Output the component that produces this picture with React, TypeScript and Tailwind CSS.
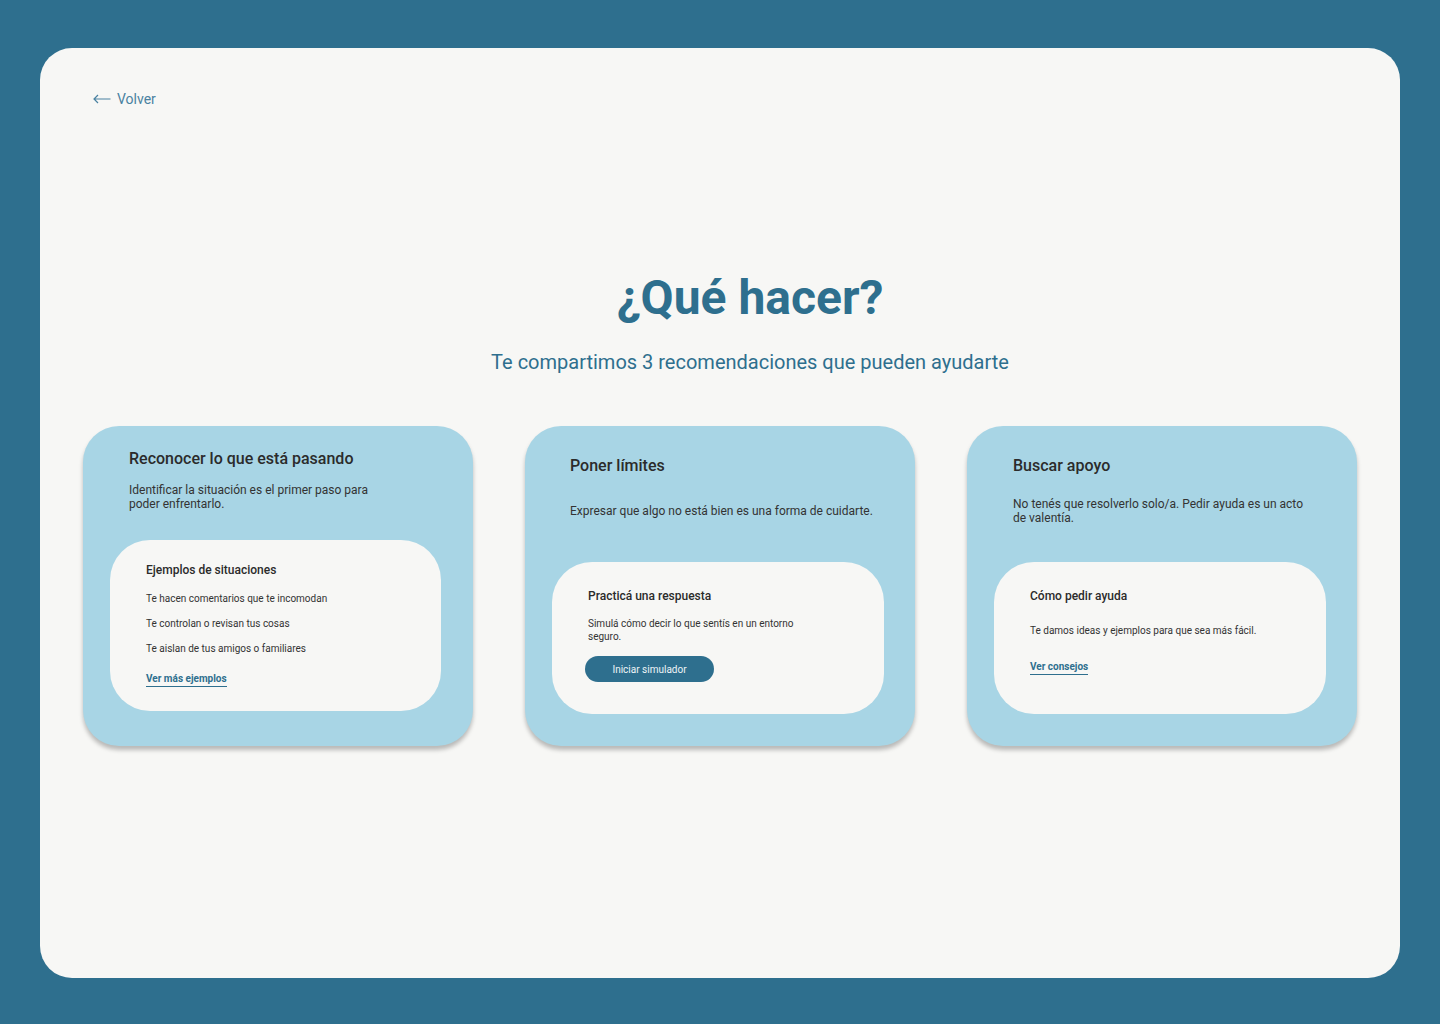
const font = { fontFamily: "Roboto, 'Noto Sans', Arial, sans-serif" };

function Link({ children }: { children: React.ReactNode }) {
  return (
    <a
      href="#"
      className="inline-block border-b-[1.5px] border-[#2e6f8e] pb-px text-[10px] font-bold leading-[12px] text-[#2e6f8e]"
    >
      {children}
    </a>
  );
}

export default function App() {
  return (
    <div className="min-h-screen w-full bg-[#2e6f8e] px-10 pt-12 pb-[46px]" style={font}>
      <div className="h-[930px] rounded-[32px] bg-[#f7f7f5] px-[43px]">
        <div className="pt-[39px] pl-[10px]">
          <a href="#" className="inline-flex items-center gap-[6px] text-sm leading-5 text-[#4a82a1]">
            <svg width="18" height="10" viewBox="0 0 18 10" fill="none" stroke="currentColor" strokeWidth="1.2">
              <path d="M17.5 5H1M5 1L1 5l4 4" />
            </svg>
            Volver
          </a>
        </div>

        <div className="pl-[60px]">
          <h1 className="mt-[159px] text-center text-[48px] font-bold leading-[56px] text-[#2e6f8e]">
            ¿Qué hacer?
          </h1>
          <p className="mt-[22px] text-center text-xl leading-7 text-[#2e6f8e]">
            Te compartimos 3 recomendaciones que pueden ayudarte
          </p>
        </div>

        <div className="mt-[50px] grid grid-cols-3 gap-[52px]">
          {/* Card 1 */}
          <div className="flex h-[320px] flex-col rounded-[36px] bg-[#a8d5e5] px-[27px] shadow-[0_4px_4px_rgba(0,0,0,0.25)]">
            <h2 className="mt-[23px] pl-[19px] text-base font-medium leading-5 text-[#2b2b2b]">
              Reconocer lo que está pasando
            </h2>
            <p className="mt-[14px] max-w-[270px] pl-[19px] text-xs leading-[14px] text-[#333]">
              Identificar la situación es el primer paso para poder enfrentarlo.
            </p>
            <div className="mt-[29px] h-[171px] w-[331px] rounded-[40px] bg-[#f7f7f5] px-9 pt-[23px]">
              <h3 className="text-xs font-medium leading-[15px] text-[#2b2b2b]">Ejemplos de situaciones</h3>
              <ul className="mt-[15px] flex flex-col gap-[13px] text-[10px] leading-[12px] text-[#333]">
                <li>Te hacen comentarios que te incomodan</li>
                <li>Te controlan o revisan tus cosas</li>
                <li>Te aislan de tus amigos o familiares</li>
              </ul>
              <div className="mt-[10px]">
                <Link>Ver más ejemplos</Link>
              </div>
            </div>
          </div>

          {/* Card 2 */}
          <div className="flex h-[320px] flex-col rounded-[36px] bg-[#a8d5e5] px-[27px] shadow-[0_4px_4px_rgba(0,0,0,0.25)]">
            <h2 className="mt-[30px] pl-[18px] text-base font-medium leading-5 text-[#2b2b2b]">
              Poner límites
            </h2>
            <p className="mt-[28px] pl-[18px] text-xs leading-[14px] text-[#333]">
              Expresar que algo no está bien es una forma de cuidarte.
            </p>
            <div className="mt-[44px] h-[152px] w-[332px] rounded-[40px] bg-[#f7f7f5] px-9 pt-[27px]">
              <h3 className="text-xs font-medium leading-[15px] text-[#2b2b2b]">Practicá una respuesta</h3>
              <p className="mt-[13px] max-w-[225px] text-[10px] leading-[13px] text-[#333]">
                Simulá cómo decir lo que sentís en un entorno seguro.
              </p>
              <button className="mt-[13px] -ml-[3px] h-[26px] w-[129px] rounded-full bg-[#2e6f8e] text-[10px] text-[#eef4f7]">
                Iniciar simulador
              </button>
            </div>
          </div>

          {/* Card 3 */}
          <div className="flex h-[320px] flex-col rounded-[36px] bg-[#a8d5e5] px-[27px] shadow-[0_4px_4px_rgba(0,0,0,0.25)]">
            <h2 className="mt-[30px] pl-[19px] text-base font-medium leading-5 text-[#2b2b2b]">
              Buscar apoyo
            </h2>
            <p className="mt-[21px] max-w-[320px] pl-[19px] text-xs leading-[14px] text-[#333]">
              No tenés que resolverlo solo/a. Pedir ayuda es un acto de valentía.
            </p>
            <div className="mt-[37px] h-[152px] w-[332px] rounded-[40px] bg-[#f7f7f5] px-9 pt-[27px]">
              <h3 className="text-xs font-medium leading-[15px] text-[#2b2b2b]">Cómo pedir ayuda</h3>
              <p className="mt-[20px] text-[10px] leading-[13px] text-[#333]">
                Te damos ideas y ejemplos para que sea más fácil.
              </p>
              <div className="mt-[16px]">
                <Link>Ver consejos</Link>
              </div>
            </div>
          </div>
        </div>
      </div>
    </div>
  );
}
